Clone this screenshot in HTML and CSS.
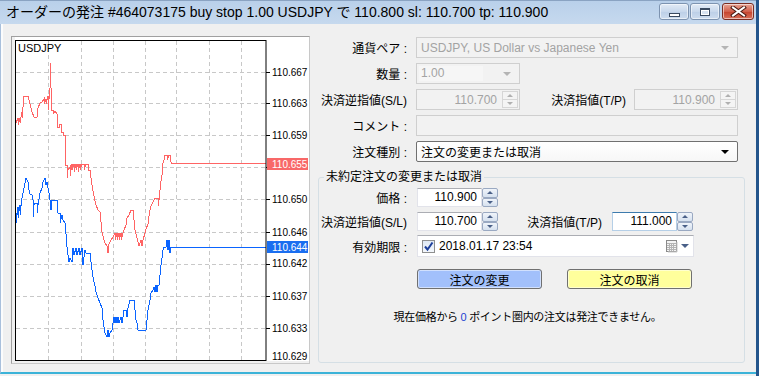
FILE: index.html
```html
<!DOCTYPE html>
<html lang="ja">
<head>
  <meta charset="UTF-8" />
  <title>オーダーの発注</title>
  <link rel="stylesheet" href="styles.css">
</head>
<body>
  <div class="window">
    <div class="titlebar">
      <span class="title">オーダーの発注 #464073175 buy stop 1.00 USDJPY で 110.800 sl: 110.700 tp: 110.900</span>
      <div class="caption-btns">
        <span class="cbtn cbtn-min"><i></i></span>
        <span class="cbtn cbtn-max"><i></i></span>
        <span class="cbtn cbtn-close">
          <svg width="17" height="11" viewBox="0 0 17 11">
            <path d="M3 1.5 L14 9.5 M14 1.5 L3 9.5" stroke="#4a1a12" stroke-width="4" stroke-linecap="square"/>
            <path d="M3 1.5 L14 9.5 M14 1.5 L3 9.5" stroke="#ffffff" stroke-width="2" stroke-linecap="square"/>
          </svg>
        </span>
      </div>
    </div>

    <div class="main">
      <!-- チャート -->
      <div class="chart">
        <svg width="297" height="326" viewBox="12 37 297 326">
          <rect x="12" y="37" width="297" height="326" fill="#f0f0f0"/>
          <rect x="15" y="37" width="294" height="324" fill="#ffffff"/>
          <g stroke="#c8c8c8" stroke-dasharray="4 3" shape-rendering="crispEdges">
            <path d="M16 72.5H266M16 103.5H266M16 135.5H266M16 167.5H266M16 199.5H266M16 232.5H266M16 264.5H266M16 296.5H266M16 328.5H266"/>
            <path d="M48.5 41V360M81.5 41V360M113.5 41V360M145.5 41V360M176.5 41V360M209.5 41V360M241.5 41V360"/>
          </g>
          <path fill="none" stroke="#ff6464" shape-rendering="crispEdges" d="M16 123 L18 118 L18 125 L20 118 L20 123 L22 112 L22 118 L24 96 L28 96 L30 104 L31 108 L32 112 L34 117 L37 117 L38 108 L40 103 L42 102 L44 99 L44 104 L46 99 L46 104 L48 96 L48 110 L50 88 L50 63 L51 88 L51 110 L53 110 L53 114 L55 111 L57 114 L57 127 L59 127 L59 124 L61 124 L61 132 L63 132 L63 135 L65 135 L65 165 L67 165 L67 178 L68 170 L70 167 L70 176 L72 164 L72 170 L74 164 L74 172 L76 164 L76 170 L78 164 L78 172 L80 164 L80 170 L82 164 L84 164 L84 170 L86 164 L88 164 L88 170 L90 170 L92 185 L94 196 L96 205 L98 210 L100 212 L101 222 L102 232 L104 240 L105 243 L107 246 L108 253 L109 244 L111 240 L113 237 L115 233 L115 240 L117 233 L117 240 L119 233 L119 240 L121 233 L121 240 L123 233 L124 230 L126 225 L127 218 L129 215 L131 210 L133 210 L134 220 L135 230 L137 238 L138 242 L139 246 L141 240 L142 246 L143 240 L145 233 L146 229 L148 224 L149 216 L150 210 L151 206 L153 202 L155 198 L158 198 L158 206 L159 200 L160 190 L161 181 L162 175 L163 163 L164 160 L165 155 L167 155 L167 160 L169 155 L170 155 L170 160 L172 163.5 L266 163.5"/>
          <path fill="none" stroke="#0a64ff" shape-rendering="crispEdges" d="M16 213 L16 223 L18 207 L18 218 L20 205 L20 215 L22 198 L24 188 L26 178 L28 182 L29 190 L30 194 L32 195 L33 200 L33 217 L34 205 L35 203 L37 203 L37 213 L38 205 L40 193 L42 188 L43 182 L45 178 L46 185 L47 182 L48 188 L49 193 L50 200 L51 210 L52 200 L57 200 L57 210 L58 213 L60 213 L60 223 L62 215 L63 220 L65 223 L66 234 L67 247 L68 255 L69 262 L70 258 L72 262 L73 248 L74 255 L76 248 L77 255 L79 248 L80 255 L82 248 L83 265 L85 250 L86 253 L90 253 L91 262 L92 270 L93 277 L95 286 L96 292 L98 298 L100 303 L102 308 L103 320 L104 327 L105 333 L107 337 L108 330 L109 337 L110 333 L112 330 L113 323 L114 317 L115 323 L116 317 L117 323 L118 317 L119 323 L121 317 L122 323 L123 317 L124 310 L126 310 L127 317 L128 308 L130 300 L134 300 L135 310 L136 320 L137 323 L138 330 L146 330 L147 320 L148 310 L150 300 L151 293 L153 290 L154 287 L155 292 L156 285 L157 292 L158 285 L159 285 L160 275 L161 265 L162 258 L163 250 L164 247 L166 247 L167 240 L168 250 L169 240 L170 253 L171 247.5 L266 247.5"/>
          <rect x="15.5" y="40.5" width="250.5" height="320" fill="none" stroke="#000000"/>
          <path stroke="#000" shape-rendering="crispEdges" d="M266 72.5h4M266 103.5h4M266 135.5h4M266 167.5h4M266 199.5h4M266 232.5h4M266 264.5h4M266 296.5h4M266 328.5h4"/>
          <text x="18" y="52" class="sym">USDJPY</text>
          <g class="axis">
            <text x="272" y="76">110.667</text>
            <text x="272" y="107">110.663</text>
            <text x="272" y="139">110.659</text>
            <text x="272" y="203">110.650</text>
            <text x="272" y="236">110.646</text>
            <text x="272" y="267">110.642</text>
            <text x="272" y="300">110.637</text>
            <text x="272" y="332">110.633</text>
            <text x="272" y="360">110.629</text>
          </g>
          <rect x="267" y="158" width="41" height="12" fill="#f86868"/>
          <text x="272" y="168" class="tag">110.655</text>
          <rect x="267" y="241" width="41" height="12" fill="#1a6ef0"/>
          <text x="272" y="251" class="tag">110.644</text>
        </svg>
      </div>

      <!-- 注文フォーム -->
      <div class="order">
        <div class="row">
          <span class="lbl">通貨ペア :</span>
          <div class="combo off w-full"><span class="combo-text">USDJPY, US Dollar vs Japanese Yen</span><span class="arrow"></span></div>
        </div>
        <div class="row">
          <span class="lbl">数量 :</span>
          <div class="combo off w-small"><span class="combo-text inner">1.00</span><span class="arrow"></span></div>
        </div>
        <div class="row">
          <span class="lbl">決済逆指値(S/L)</span>
          <div class="spin off"><span class="spin-val">110.700</span><span class="spin-btns"><i class="up"></i><i class="down"></i></span></div>
          <span class="lbl lbl-tp">決済指値(T/P)</span>
          <div class="spin off"><span class="spin-val">110.900</span><span class="spin-btns"><i class="up"></i><i class="down"></i></span></div>
        </div>
        <div class="row">
          <span class="lbl">コメント :</span>
          <div class="edit off w-full"></div>
        </div>
        <div class="row">
          <span class="lbl">注文種別 :</span>
          <div class="combo on w-full"><span class="combo-text">注文の変更または取消</span><span class="arrow"></span></div>
        </div>

        <fieldset class="group">
          <legend>未約定注文の変更または取消</legend>
          <div class="grow">
            <span class="lbl">価格 :</span>
            <div class="num">110.900</div>
            <span class="spinner"><i class="up"></i><i class="down"></i></span>
          </div>
          <div class="grow">
            <span class="lbl">決済逆指値(S/L)</span>
            <div class="num">110.700</div>
            <span class="spinner"><i class="up"></i><i class="down"></i></span>
            <span class="lbl lbl-tp2">決済指値(T/P)</span>
            <div class="num focus">111.000</div>
            <span class="spinner"><i class="up"></i><i class="down"></i></span>
          </div>
          <div class="grow grow-date">
            <span class="lbl">有効期限 :</span>
            <div class="date">
              <span class="check">
                <svg width="11" height="11" viewBox="0 0 11 11"><path d="M2 5.5 L4.5 8.5 L9.5 1.5" fill="none" stroke="#1d3f9a" stroke-width="2"/></svg>
              </span>
              <span class="date-text">2018.01.17 23:54</span>
              <span class="cal">
                <svg width="12" height="13" viewBox="0 0 12 13">
                  <rect x="0.5" y="0.5" width="10" height="11" fill="#f4f4f4" stroke="#8a8a8a"/>
                  <path d="M1 3.5h9M1 5.5h9M1 7.5h9M1 9.5h9M3.5 3v8M5.5 3v8M7.5 3v8" stroke="#b4b4b4"/>
                  <path d="M11 2v10H2" fill="none" stroke="#c8c8c8"/>
                </svg>
              </span>
              <span class="date-arrow"></span>
            </div>
          </div>
          <div class="btns">
            <button class="btn btn-modify">注文の変更</button>
            <button class="btn btn-cancel">注文の取消</button>
          </div>
          <p class="info">現在価格から <span class="zero">0</span> ポイント圏内の注文は発注できません。</p>
        </fieldset>
      </div>
    </div>
  </div>
</body>
</html>
```

FILE: styles.css
```css
* {
  margin: 0;
  padding: 0;
  box-sizing: border-box;
}
body {
  width: 759px;
  height: 376px;
  overflow: hidden;
  background: #f0f0f0;
  color: #000;
  font-family: "Liberation Sans", "Noto Sans CJK JP", sans-serif;
  font-size: 12px;
}
.window {
  width: 759px;
  height: 376px;
  display: flex;
  flex-direction: column;
  background: #f0f0f0;
  border-right: 3px solid #24558c;
  padding-bottom: 2px;
}

/* タイトルバー */
.titlebar {
  height: 24px;
  flex: none;
  display: flex;
  align-items: flex-start;
  padding-left: 6px;
  border-top: 1px solid #8aa3c2;
  background: linear-gradient(#b9d0ea, #c6d9ee);
}
.title {
  font-size: 14px;
  line-height: 22px;
  white-space: nowrap;
}
.caption-btns {
  margin-left: auto;
  margin-top: 2px;
  margin-right: 2px;
  display: flex;
  gap: 1px;
}
.cbtn {
  height: 17px;
  display: flex;
  align-items: center;
  justify-content: center;
  border: 1px solid #7d93b0;
  border-radius: 3px;
  background: linear-gradient(#e2ebf6, #c8d8ec 50%, #bccfe7 51%, #cddcee);
  box-shadow: inset 0 0 0 1px rgba(255, 255, 255, 0.55);
}
.cbtn-min { width: 30px; }
.cbtn-max { width: 30px; }
.cbtn-close {
  width: 32px;
  margin-left: 1px;
  border-color: #7a2d22;
  background: linear-gradient(#e8a595, #d2604c 50%, #c4422c 51%, #d9705a);
}
.cbtn-min i {
  width: 11px;
  height: 4px;
  margin-top: 6px;
  background: #fff;
  border: 1px solid #3a4a60;
}
.cbtn-max i {
  width: 10px;
  height: 8px;
  border: 1px solid #3a4a60;
  border-top-width: 2px;
  background: #d8e3f0;
  box-shadow: inset 0 0 0 1px #fff;
}

/* 本体 */
.main {
  flex: 1;
  display: flex;
  padding: 12px 0 0 10px;
  border-left: 1px solid #a9c0dc;
  box-shadow: inset 2px 0 #fbfcfd;
  border-bottom: 2px solid #3cb3d8;
}
.chart {
  width: 299px;
  height: 328px;
  flex: none;
  border: 1px solid #a0a0a0;
  border-right-color: #c8c8c8;
  border-bottom-color: #c8c8c8;
}
.chart svg {
  display: block;
}
.chart text {
  font-family: "Liberation Sans", sans-serif;
  font-size: 10px;
  fill: #000;
}
.chart .sym {
  font-size: 11px;
}
.chart .tag {
  fill: #fff;
}

/* フォーム */
.order {
  width: 427px;
  margin-left: 8px;
  padding-top: 1px;
  display: flex;
  flex-direction: column;
}
.row {
  height: 21px;
  margin-bottom: 5px;
  display: flex;
  align-items: center;
}
.lbl {
  width: 89px;
  margin-right: 9px;
  text-align: right;
  white-space: nowrap;
}
.lbl-tp {
  width: 106px;
  margin-right: 8px;
}
.w-full { width: 322px; }
.w-small { width: 104px; }

.combo, .spin, .edit {
  height: 21px;
  display: flex;
  align-items: center;
}
.combo.off, .spin.off, .edit.off {
  border: 1px solid #cfcfcf;
  background: #f2f2f2;
  color: #a3a3a3;
}
.combo-text {
  flex: 1;
  padding-left: 4px;
  white-space: nowrap;
}
.combo-text.inner {
  align-self: stretch;
  margin: 2px 20px 2px 2px;
  padding-left: 2px;
  line-height: 15px;
  background: #f6f6f6;
}
.arrow {
  width: 0;
  height: 0;
  margin-right: 8px;
  border-left: 4px solid transparent;
  border-right: 4px solid transparent;
  border-top: 4px solid #b4b4b4;
}
.combo.on {
  border: 1px solid #707070;
  border-radius: 2px;
  background: linear-gradient(#ffffff, #f7f7f7);
}
.combo.on .arrow {
  border-top-color: #000;
}
.spin.off {
  width: 104px;
}
.spin-val {
  flex: 1;
  text-align: right;
  padding-right: 5px;
}
.spin-btns {
  width: 16px;
  height: 17px;
  margin-right: 1px;
  display: flex;
  flex-direction: column;
}
.spin-btns i, .spinner i {
  flex: 1;
  display: flex;
  align-items: center;
  justify-content: center;
  border: 1px solid #d6d6d6;
  background: #f4f4f4;
}
.spin-btns i + i {
  border-top: none;
}
.up::before, .down::before {
  content: "";
  border-left: 3px solid transparent;
  border-right: 3px solid transparent;
}
.up::before { border-bottom: 3px solid #b0b0b0; }
.down::before { border-top: 3px solid #b0b0b0; }

/* グループ */
.group {
  width: 427px;
  height: 193px;
  margin-top: 3px;
  padding: 4px 0 0;
  border: 1px solid #d5dfe5;
  border-radius: 3px;
}
.group legend {
  margin-left: 5px;
  padding: 0 2px;
  line-height: 14px;
}
.grow {
  height: 19px;
  margin-bottom: 5px;
  display: flex;
  align-items: center;
}
.grow-date {
  height: 22px;
  margin-top: -1px;
}
.group .lbl {
  width: 88px;
  margin-right: 10px;
}
.group .lbl-tp2 {
  width: 104px;
  margin-right: 10px;
}
.num {
  width: 65px;
  height: 19px;
  line-height: 17px;
  padding-right: 4px;
  text-align: right;
  background: #fff;
  border: 1px solid #e2e3ea;
  border-top-color: #abadb3;
}
.num.focus {
  border-color: #b5cfe7;
  border-top-color: #3d7bad;
}
.spinner {
  width: 16px;
  height: 19px;
  display: flex;
  flex-direction: column;
}
.spinner i {
  border-color: #9aa9c2;
  border-radius: 2px;
  background: linear-gradient(#f0f4fa, #d6e1ef);
}
.spinner .up::before { border-bottom-color: #4a6088; }
.spinner .down::before { border-top-color: #4a6088; }

.date {
  width: 277px;
  height: 22px;
  display: flex;
  align-items: center;
  background: #fff;
  border: 1px solid #e2e3ea;
  border-top-color: #abadb3;
  padding-left: 4px;
}
.check {
  width: 13px;
  height: 13px;
  display: flex;
  align-items: center;
  justify-content: center;
  border: 1px solid #8e8f8f;
  background: linear-gradient(#dfe8f4, #f4f8fc);
}
.date-text {
  flex: 1;
  margin-left: 4px;
}
.cal {
  display: flex;
  margin-right: 3px;
}
.date-arrow {
  margin-right: 4px;
  border-left: 4px solid transparent;
  border-right: 4px solid transparent;
  border-top: 4px solid #4a6088;
}

.btns {
  display: flex;
  gap: 25px;
  margin: 12px 0 0 98px;
}
.btn {
  width: 125px;
  height: 20px;
  border: 1px solid #707070;
  border-radius: 3px;
  font-family: "Liberation Sans", "Noto Sans CJK JP", sans-serif;
  font-size: 12px;
  color: #000;
  box-shadow: inset 0 0 0 1px rgba(255, 255, 255, 0.5);
}
.btn-modify { background: #a2c0fb; }
.btn-cancel { background: #ffff9c; }

.info {
  margin-top: 19px;
  text-align: center;
  font-size: 11px;
  letter-spacing: -0.3px;
  padding-right: 8px;
}
.zero {
  color: #1d3fd0;
}
```
